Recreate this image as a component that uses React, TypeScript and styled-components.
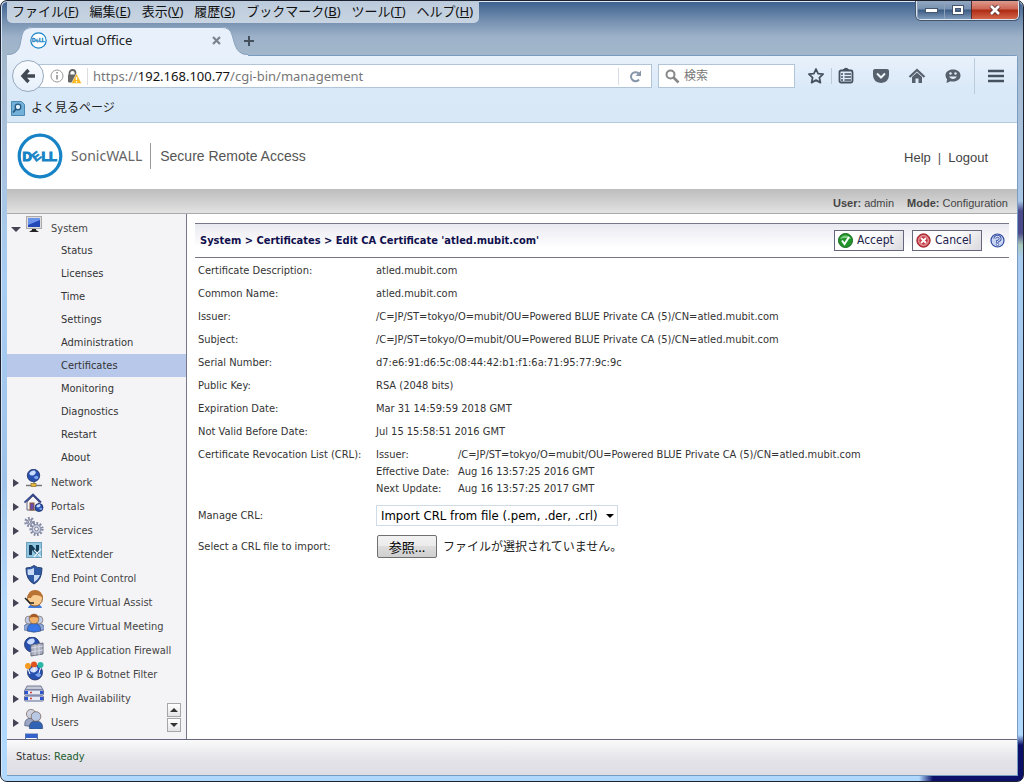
import React, { useRef, useState } from 'react';
import styled, { createGlobalStyle } from 'styled-components';

const ui = "'DejaVu Sans Condensed', 'Noto Sans', 'Noto Sans CJK JP', sans-serif";
const jp = "'Noto Sans', 'Noto Sans CJK JP', sans-serif";
const arial = "'Liberation Sans', 'Noto Sans CJK JP', sans-serif";

const GlobalStyle = createGlobalStyle`
  * { box-sizing: border-box; }
  body { margin: 0; font-family: ${ui}; font-size: 11px; color: #333; }
  button, input, select { font-family: inherit; margin: 0; }
`;

const Frame = styled.div`
  display: flex;
  flex-direction: column;
  height: 100vh;
  padding: 0 5px 0 6px;
  border: 1px solid #1c2230;
  border-radius: 7px;
  overflow: hidden;
  background:
    linear-gradient(90deg, transparent calc(100% - 104px), #0c1068 calc(100% - 90px)) bottom / 100% 6px no-repeat,
    linear-gradient(180deg, transparent 200px, #4b4a8c 210px, #4b4a8c 232px, #a9c8b8 244px, transparent 256px, transparent calc(100% - 46px), #0c1068 calc(100% - 36px)) right / 6px 100% no-repeat,
    linear-gradient(180deg, #3b5f8e 0, #7690b0 20px, #9db2c9 36px, #a3b7cb 54px, #a9bdd4 90px, #a8cdf3 280px, #9fc2e8 480px, #b5d9fb 600px, #b0d8ff 100%);
  box-shadow: inset 0 1px #dfe8f3, inset 1px 0 #d5e6f6;
`;

const TopRow = styled.div`
  display: flex;
  justify-content: space-between;
  height: 23px;
  flex: none;
  margin-right: -1px;
`;

const MenuBar = styled.nav`
  display: flex;
  gap: 11px;
  height: 22px;
  padding: 0 6px 0 5px;
  border-radius: 0 0 5px 5px;
  background: linear-gradient(180deg, #bccbdc, #c8d4e1);
`;

const MenuItem = styled.button`
  border: 0;
  padding: 0 0 3px;
  background: none;
  font: 13px/18px ${jp};
  color: #111;
  white-space: nowrap;
`;

const WindowButtons = styled.div`
  display: flex;
  height: 19px;
  border: 1px solid #dbe5ef;
  border-top: 0;
  border-radius: 0 0 5px 5px;
  overflow: hidden;
  box-shadow: 0 0 0 1px #44546c;
`;

const WindowButton = styled.button<{ $close?: boolean }>`
  display: flex;
  align-items: center;
  justify-content: center;
  width: ${p => (p.$close ? 47 : 27)}px;
  padding: 0;
  border: 0;
  border-left: 1px solid ${p => (p.$close ? '#5a2a2a' : '#8da1b8')};
  background: ${p => p.$close
    ? 'linear-gradient(180deg, #dc9a8d 0, #cd6553 45%, #ac2a12 50%, #d4664a 100%)'
    : 'linear-gradient(180deg, #93a8c2 0, #7590b0 45%, #3b5a82 50%, #7f9bbb 100%)'};
`;

const TabStrip = styled.div`
  display: flex;
  align-items: flex-end;
  height: 31px;
  flex: none;
`;

const Tab = styled.div`
  position: relative;
  display: flex;
  align-items: center;
  width: 233px;
  height: 28px;
  padding: 0 19px 2px 23px;
  font: 13px/26px ${jp};
  color: #222;
`;

const TabShape = styled.svg`
  position: absolute;
  left: 0;
  top: 0;
`;

const TabTitle = styled.span`
  position: relative;
  flex: 1;
  padding-left: 6px;
`;

const PlainButton = styled.button`
  position: relative;
  display: flex;
  align-items: center;
  justify-content: center;
  border: 0;
  padding: 0;
  background: none;
  color: #4b5663;
`;

const NewTab = styled(PlainButton)`
  width: 18px;
  height: 28px;
`;

const Client = styled.div`
  display: flex;
  flex-direction: column;
  flex: 1;
  min-height: 0;
  margin-bottom: 5px;
  border: 1px solid #7a9cc0;
  border-width: 1px 1px 1px 0;
  border-radius: 0 3px 0 0;
  background: #fff;
`;

const Chrome = styled.div`
  background: linear-gradient(180deg, #e8f1fb 0, #dae9f8 32px, #d8e8f7 100%);
  border-bottom: 1px solid #b6cadd;
`;

const NavBar = styled.div`
  display: flex;
  align-items: center;
  height: 40px;
  padding: 0 12px 0 5px;
`;

const BackButton = styled.button`
  position: relative;
  display: flex;
  align-items: center;
  justify-content: center;
  width: 32px;
  height: 32px;
  margin-right: -6px;
  padding: 0;
  border: 1px solid #97a9bd;
  border-radius: 50%;
  background: linear-gradient(180deg, #f8fbfe, #e6f0fa);
`;

const UrlBox = styled.div`
  display: flex;
  align-items: center;
  flex: 1;
  height: 24px;
  padding-left: 11px;
  border: 1px solid #b2c5d8;
  background: #fff;
`;

const UrlText = styled.div`
  flex: 1;
  margin-left: 5px;
  padding-left: 5px;
  border-left: 1px solid #ddd;
  font: 13px/17px ${jp};
  color: #777;
`;

const Host = styled.span`
  color: #111;
`;

const Reload = styled(PlainButton)`
  width: 33px;
  height: 17px;
  border-left: 1px solid #d5dce3;
`;

const SearchBox = styled.label`
  display: flex;
  align-items: center;
  width: 137px;
  height: 24px;
  margin: 0 12px 0 6px;
  padding-left: 6px;
  border: 1px solid #b2c5d8;
  background: #fff;
`;

const SearchInput = styled.input`
  flex: 1;
  min-width: 0;
  margin-left: 4px;
  padding: 0;
  border: 0;
  outline: 0;
  font: 12px/18px ${jp};
  background: none;
  &::placeholder { color: #777; opacity: 1; }
`;

const Tools = styled.div`
  display: flex;
  align-items: center;
  gap: 18px;
`;

const ToolDivider = styled.i<{ $tall?: boolean }>`
  width: 1px;
  height: ${p => (p.$tall ? 36 : 16)}px;
  margin: 0 ${p => (p.$tall ? -6 : -12)}px;
  background: #bccbda;
`;

const Bookmarks = styled.div`
  display: flex;
  align-items: center;
  gap: 6px;
  height: 26px;
  padding: 0 4px 2px;
  font: 12px/20px ${jp};
  color: #222;
`;

const Brand = styled.header`
  display: flex;
  align-items: center;
  flex: none;
  height: 66px;
  padding: 0 29px 0 10px;
  font: 13px/20px ${arial};
  color: #555;
`;

const BrandName = styled.span`
  margin-left: 8px;
  padding-right: 8px;
  font: 14px/26px 'Noto Sans', sans-serif;
  color: #666;
  border-right: 1px solid #999;
`;

const Product = styled.span`
  flex: 1;
  padding-left: 9px;
  font-size: 14px;
`;

const HeadLinks = styled.div`
  display: flex;
  gap: 7px;
  padding-top: 4px;
`;

const HeadLink = styled.a`
  color: #444;
  text-decoration: none;
`;

const ModeBar = styled.div`
  display: flex;
  justify-content: flex-end;
  gap: 13px;
  flex: none;
  height: 25px;
  padding: 4px 9px 0;
  border-bottom: 1px solid #aaa;
  background: linear-gradient(180deg, #bdbdbd, #e2e2e2);
  font: 11px/20px ${arial};
  color: #444;
`;

const Main = styled.div`
  display: flex;
  flex: 1;
  min-height: 0;
`;

const Sidebar = styled.nav`
  position: relative;
  width: 180px;
  flex: none;
  overflow: hidden;
  padding-top: 1px;
  border-right: 1px solid #77778a;
  background: #f4f4f7;
`;

const TreeRow = styled.a`
  display: grid;
  grid-template-columns: 17px 27px 1fr;
  height: 24px;
  color: #444;
  text-decoration: none;
  line-height: 28px;
  white-space: nowrap;
`;

const Caret = styled.span<{ $open?: boolean }>`
  align-self: center;
  justify-self: center;
  width: 0;
  height: 0;
  border: 4px solid transparent;
  ${p => (p.$open
    ? 'border-top: 5px solid #444455; border-bottom: 0; border-left-width: 5px; border-right-width: 5px;'
    : 'border-left: 6px solid #444455; border-right: 0;')}
`;

const SubRow = styled.a<{ $active?: boolean }>`
  display: block;
  height: 23px;
  padding-left: 54px;
  line-height: 24px;
  color: #333;
  text-decoration: none;
  background: ${p => (p.$active ? '#b8c8ea' : 'none')};
`;

const Scroller = styled.div`
  position: absolute;
  right: 5px;
  bottom: 7px;
  display: grid;
  gap: 1px;
`;

const ScrollButton = styled.button`
  display: flex;
  align-items: center;
  justify-content: center;
  width: 14px;
  height: 14px;
  padding: 0;
  border: 1px solid #a5a5aa;
  background: linear-gradient(180deg, #fff, #e4e4e8);
`;

const Content = styled.main`
  flex: 1;
  min-width: 0;
  padding: 9px 8px 0 8px;
`;

const TitleBar = styled.div`
  display: flex;
  align-items: center;
  gap: 8px;
  height: 35px;
  padding: 0 4px 0 5px;
  border-top: 1px solid #77778a;
  border-bottom: 1px solid #77778a;
  background: linear-gradient(180deg, #e9e9f1 0, #fff 70%);
`;

const Title = styled.h1`
  flex: 1;
  margin: 0;
  font-size: 11px;
  font-weight: bold;
  color: #10104c;
`;

const ActionButton = styled.button`
  display: flex;
  align-items: center;
  gap: 4px;
  width: 70px;
  height: 21px;
  padding: 0 3px 1px;
  border: 1px solid #66667c;
  background: linear-gradient(135deg, #fff 50%, #d9d9de);
  font-size: 12px;
  line-height: 18px;
  color: #22224c;
`;

const Details = styled.table`
  width: 100%;
  margin-top: 1px;
  border-collapse: collapse;
  line-height: 17px;
`;

const Label = styled.th`
  width: 181px;
  padding: 3px 0 3px 3px;
  font-weight: normal;
  text-align: left;
  vertical-align: top;
`;

const Value = styled.td`
  padding: 3px 0;
  vertical-align: top;
`;

const ControlLabel = styled(Label)`
  padding-top: 7px;
  padding-bottom: 7px;
`;

const ControlValue = styled(Value)`
  height: 31px;
  vertical-align: middle;
`;

const Crl = styled.dl`
  display: grid;
  grid-template-columns: 82px 1fr;
  margin: 0;
`;

const CrlValue = styled.dd`
  margin: 0;
`;

const SelectWrap = styled.div`
  position: relative;
  display: inline-flex;
  align-items: center;
  width: 242px;
  height: 21px;
  vertical-align: middle;
`;

const Select = styled.select`
  appearance: none;
  width: 100%;
  height: 100%;
  padding: 0 18px 0 4px;
  border: 1px solid #cfdbe8;
  border-radius: 0;
  background: #fff;
  color: #000;
  font-size: 13px;
`;

const SelectArrow = styled.svg`
  position: absolute;
  right: 4px;
  pointer-events: none;
`;

const FileRow = styled.div`
  display: flex;
  align-items: center;
  gap: 6px;
  padding-left: 1px;
  font: 12px/20px ${jp};
  color: #222;
`;

const Browse = styled.button`
  width: 60px;
  height: 23px;
  padding: 0;
  border: 1px solid #707070;
  border-radius: 2px;
  background: linear-gradient(180deg, #f2f2f2 0, #ebebeb 48%, #dddddd 50%, #cfcfcf 100%);
  font: 13px/20px ${jp};
  color: #000;
`;

const StatusBar = styled.footer`
  flex: none;
  height: 36px;
  padding-left: 9px;
  border-top: 1px solid #66667a;
  background: linear-gradient(180deg, #fafafa, #e2e2e8 60%, #dedee4);
  line-height: 34px;
  color: #333;
`;

const Ready = styled.span`
  color: #1d5c2c;
`;

const Logo = styled.svg`
  position: relative;
  flex: none;
`;

const DellLogo = ({ size }: { size: number }) => (
  <Logo width={size} height={size} viewBox="0 0 46 46">
    <circle cx="23" cy="23" r="20.8" fill="#fff" stroke="#1683c6" strokeWidth="3.2" />
    <g fill="#1683c6" stroke="#1683c6" strokeWidth="1.1" fontFamily="Liberation Sans, sans-serif" fontWeight="bold" fontSize="13">
      <text x="5.5" y="27.5">D</text>
      <text x="15.3" y="27.3" fontSize="12" strokeWidth=".6" transform="rotate(-38 19.5 23)">E</text>
      <text x="24.5" y="27.5">L</text>
      <text x="32" y="27.5">L</text>
    </g>
  </Logo>
);

const Globe = ({ x = 10, y = 8, r = 7 }: { x?: number; y?: number; r?: number }) => (
  <g>
    <circle cx={x} cy={y} r={r} fill="#274fae" stroke="#1d2d60" strokeWidth=".8" />
    <path d={`M${x - r * 0.7} ${y - r * 0.3}q${r * 0.3} ${-r * 0.6} ${r * 0.9} ${-r * 0.5}q${r * 0.4} ${r * 0.4} ${-r * 0.1} ${r * 0.7}q${-r * 0.5} ${r * 0.3} ${-r * 0.8} ${-r * 0.2}z`} fill="#c9dcff" />
    <path d={`M${x} ${y + r * 0.3}q${r * 0.6} ${-r * 0.5} ${r * 0.8} 0q${-r * 0.2} ${r * 0.6} ${-r * 0.8} 0z`} fill="#7ea5ee" />
  </g>
);

const Person = ({ x, y, s = 1, head, body }: { x: number; y: number; s?: number; head: string; body: string }) => (
  <g transform={`translate(${x} ${y}) scale(${s})`}>
    <path d="M-6 10q0-6 6-6t6 6v1q-6 2-12 0z" fill={body} stroke="#33476e" strokeWidth=".6" />
    <circle cx="0" cy="0" r="4.4" fill={head} stroke="#6a5040" strokeWidth=".6" />
  </g>
);

const cog = (cx: number, cy: number, r: number) => (
  <g fill="none">
    <circle cx={cx} cy={cy} r={r} stroke="#858ba6" strokeWidth="3" strokeDasharray="1.7 1.5" />
    <circle cx={cx} cy={cy} r={r - 1.2} fill="#c9cddd" stroke="#7c829c" strokeWidth=".9" />
    <circle cx={cx} cy={cy} r={r / 3} fill="#f4f4f7" stroke="#70768f" strokeWidth=".8" />
  </g>
);

const drawings: Record<string, React.ReactNode> = {
  System: <><rect x="2.5" y="1.5" width="15" height="12" fill="#ddd" stroke="#aaa" /><rect x="4" y="3" width="12" height="9" fill="#2448b8" /><path d="M4 3h12v2L4 10z" fill="#6d94ec" /><path d="M8 14h4v1l3 2H5l3-2z" fill="#222" /></>,
  Network: <><Globe x={9.5} y={6.5} r={6.2} /><path d="M2 16.5h16M10 13v3" stroke="#777" strokeWidth="1.3" /><rect x="7" y="14.5" width="5" height="3" fill="#e5b83c" stroke="#84651c" strokeWidth=".6" /></>,
  Portals: <><path d="M3 9l6-6 6 6v8H3z" fill="#f4f4f8" stroke="#667" /><path d="M.5 9.5L9 1.5l8 8" fill="none" stroke="#36478d" strokeWidth="1.8" /><rect x="6" y="10" width="4" height="7" fill="#6748b4" stroke="#8b5a2b" /><Globe x={15} y={14.5} r={4} /></>,
  Services: <>{cog(5.5, 5, 3.8)}{cog(12.5, 12, 5.6)}</>,
  NetExtender: <><rect x="2.5" y="1.5" width="15" height="15" fill="#8fc5df" stroke="#6da0bb" /><path d="M5 14V4h3l4 5V4h3v10h-2L8 9v5z" fill="#153a58" /><path d="M10 16l7-8M10 9l7 7" stroke="#dff4ff" strokeWidth="1.2" /></>,
  'End Point Control': <><path d="M2 3q5 0 8-2.5q3 2.5 8 2.5q0 12-8 16Q2 15 2 3z" fill="#3059a5" stroke="#274173" /><path d="M10 3v7H4q-.5-2-.5-5.5Q7 4.5 10 3zM10 10h6q-2 5-6 7z" fill="#c9dbf8" /></>,
  'Secure Virtual Assist': <><path d="M4 19q1-4 7-4t7 4z" fill="#3f79dc" /><circle cx="11" cy="9.500" r="7.5" fill="#f8cb91" stroke="#9b642d" /><path d="M3.500 9Q4 1 11 1t8 8q-3-3-8-3-3 0-4 3z" fill="#b97434" /><path d="M1 9l5 5h4" stroke="#222" strokeWidth="1.5" fill="none" /></>,
  'Secure Virtual Meeting': <><Person x={5} y={7} s={0.9} head="#bfcde8" body="#8fa7d7" /><Person x={15} y={7} s={0.9} head="#bfcde8" body="#8fa7d7" /><Person x={10} y={6} s={1.1} head="#eeb06c" body="#3977e8" /><path d="M5.500 5q1-4 4.500-4t4.500 4q-5-2-9 0z" fill="#a95b26" /></>,
  'Web Application Firewall': <><Globe x={8} y={7.5} r={7.5} /><path d="M7 8l12-2v11l-12 2z" fill="#a9adbd" stroke="#686d80" /><path d="M7 11l12-2M7 15l12-2M11 7.500v11M15 7v11" stroke="#d7d9e3" /></>,
  'Geo IP & Botnet Filter': <><Globe x={11} y={11.5} r={7.5} /><circle cx="4" cy="5" r="3" fill="#f59b23" /><circle cx="10" cy="3.500" r="3" fill="#e0541f" /><circle cx="16.5" cy="4" r="3" fill="#2bb7a8" /><path d="M4 8l2 5M10 6v5M16.500 7L15 12" stroke="#fff" /></>,
  'High Availability': <><path d="M3 1h14l2 4H1z" fill="#c3c7d6" stroke="#777c92" /><rect x=".5" y="5" width="19" height="5" rx="1" fill="#e7e9f2" stroke="#5f6b95" /><rect x=".5" y="11" width="19" height="5" rx="1" fill="#e7e9f2" stroke="#5f6b95" /><path d="M1 7.500h3M1 13.500h3M16 7.500h3M16 13.500h3" stroke="#2b55d0" strokeWidth="3" /><path d="M6 7.500h2M6 13.500h2" stroke="#d03a3a" strokeWidth="1.5" /></>,
  Users: <><Person x={7} y={5} s={1.05} head="#ccd2e0" body="#9ba7c4" /><Person x={12} y={7.5} s={1.1} head="#b9c8e4" body="#3164b4" /></>,
  Log: <><rect x="1.5" y="1" width="12" height="14" fill="#fff" stroke="#5670b4" /><rect x="2" y="1" width="11" height="4" fill="#3462cc" /><path d="M4 7h5" stroke="#89a" /><circle cx="13" cy="9" r="3" fill="#dbe5f5" stroke="#69a" /></>,
};

const ItemIcon = ({ name }: { name: string }) => (
  <svg width="20" height="20" viewBox="0 0 20 20" aria-hidden="true">{drawings[name]}</svg>
);

const menus = [['ファイル', 'F'], ['編集', 'E'], ['表示', 'V'], ['履歴', 'S'], ['ブックマーク', 'B'], ['ツール', 'T'], ['ヘルプ', 'H']];
const systemPages = ['Status', 'Licenses', 'Time', 'Settings', 'Administration', 'Certificates', 'Monitoring', 'Diagnostics', 'Restart', 'About'];
const sections = ['Network', 'Portals', 'Services', 'NetExtender', 'End Point Control', 'Secure Virtual Assist', 'Secure Virtual Meeting', 'Web Application Firewall', 'Geo IP & Botnet Filter', 'High Availability', 'Users'];
const subject = '/C=JP/ST=tokyo/O=mubit/OU=Powered BLUE Private CA (5)/CN=atled.mubit.com';
const fields = [
  ['Certificate Description:', 'atled.mubit.com'],
  ['Common Name:', 'atled.mubit.com'],
  ['Issuer:', subject],
  ['Subject:', subject],
  ['Serial Number:', 'd7:e6:91:d6:5c:08:44:42:b1:f1:6a:71:95:77:9c:9c'],
  ['Public Key:', 'RSA (2048 bits)'],
  ['Expiration Date:', 'Mar 31 14:59:59 2018 GMT'],
  ['Not Valid Before Date:', 'Jul 15 15:58:51 2016 GMT'],
];

function BrowserTop() {
  return (
    <>
      <TopRow>
        <MenuBar>
          {menus.map(([name, key]) => <MenuItem key={key}>{name}(<u>{key}</u>)</MenuItem>)}
        </MenuBar>
        <WindowButtons>
          <WindowButton aria-label="Minimize"><svg width="13" height="6"><rect x=".5" y="1.5" width="12" height="4" fill="#fff" stroke="#46566c" /></svg></WindowButton>
          <WindowButton aria-label="Maximize"><svg width="12" height="10"><rect x="2" y="2" width="8" height="6" fill="none" stroke="#46566c" strokeWidth="4" /><rect x="2" y="2" width="8" height="6" fill="none" stroke="#fff" strokeWidth="2" /></svg></WindowButton>
          <WindowButton $close aria-label="Close"><svg width="14" height="12"><path d="M3 2l8 8M11 2l-8 8" stroke="#5c3138" strokeWidth="4.5" /><path d="M3 2l8 8M11 2l-8 8" stroke="#fff" strokeWidth="2.6" /></svg></WindowButton>
        </WindowButtons>
      </TopRow>
      <TabStrip>
        <Tab>
          <TabShape width="241" height="29" viewBox="0 0 241 29">
            <path d="M0 29V28Q11 28 13 18L15 8Q17 0 26 0H215Q223 0 225 8L228 18Q231 28 241 28V29z" fill="#e8f1fb" />
            <path d="M0 27.5Q11 27.5 13 18L15 8Q17 .5 26 .5H215Q223 .5 225 8L228 18Q231 27.5 241 27.5" fill="none" stroke="#8aa2bc" />
          </TabShape>
          <DellLogo size={17} />
          <TabTitle>Virtual Office</TabTitle>
          <PlainButton aria-label="Close tab"><svg width="9" height="9"><path d="M1 1l7 7M8 1L1 8" stroke="#7a8491" strokeWidth="2.2" /></svg></PlainButton>
        </Tab>
        <NewTab aria-label="New tab"><svg width="12" height="12"><path d="M6 1v10M1 6h10" stroke="#44505e" strokeWidth="2" /></svg></NewTab>
      </TabStrip>
    </>
  );
}

function BrowserBars() {
  return (
    <Chrome>
      <NavBar>
        <BackButton aria-label="Back"><svg width="16" height="16"><path d="M8.500 2L3 8l5.500 6M3 8h12" fill="none" stroke="#404952" strokeWidth="3.4" /></svg></BackButton>
        <UrlBox>
          <svg width="32" height="16" viewBox="0 0 32 16">
            <circle cx="7" cy="8" r="6" fill="none" stroke="#999" /><path d="M7 7v4.500M7 4v1.600" stroke="#888" strokeWidth="1.5" />
            <path d="M19.500 7V5a3 3 0 016 0v2" fill="none" stroke="#666" strokeWidth="1.8" /><rect x="18" y="6.5" width="9" height="8" rx="1" fill="#666" />
            <path d="M26.500 5.500l5.200 10H21.300z" fill="#fdb81e" stroke="#fff" strokeWidth=".5" /><path d="M26.500 9v3M26.500 13v1.400" stroke="#fff" strokeWidth="1.4" />
          </svg>
          <UrlText>https://<Host>192.168.100.77</Host>/cgi-bin/management</UrlText>
          <Reload aria-label="Reload"><svg width="13" height="13"><path d="M10 9.500A4.500 4.500 0 119.500 3.300" fill="none" stroke="#8796a8" strokeWidth="2" /><path d="M12 .5V6H6.500z" fill="#8796a8" /></svg></Reload>
        </UrlBox>
        <SearchBox>
          <svg width="15" height="15"><circle cx="5.5" cy="5.5" r="4" fill="none" stroke="#888" strokeWidth="2" /><path d="M8.500 8.500l5 5" stroke="#888" strokeWidth="2.6" /></svg>
          <SearchInput placeholder="検索" aria-label="検索" />
        </SearchBox>
        <Tools>
          <PlainButton aria-label="Bookmark"><svg width="18" height="18"><path d="M9 2l2.100 4.600 5 .6-3.700 3.400 1 5L9 13.100l-4.400 2.500 1-5L1.900 7.200l5-.6z" fill="none" stroke="#46525f" strokeWidth="1.8" strokeLinejoin="round" /></svg></PlainButton>
          <ToolDivider />
          <PlainButton aria-label="Bookmarks list"><svg width="16" height="18"><rect x="1.5" y="3.5" width="13" height="12" rx="1.5" fill="none" stroke="#46525f" strokeWidth="1.8" /><path d="M5 3q3-3.500 6 0z" fill="#46525f" stroke="#46525f" /><path d="M3 7h2M6.500 7H13M3 10h2M6.500 10H13M3 13h2M6.500 13H13" stroke="#46525f" strokeWidth="1.3" /></svg></PlainButton>
          <PlainButton aria-label="Pocket"><svg width="18" height="18"><path d="M1 4q0-2 2-2h12q2 0 2 2v4q0 7-8 8-8-1-8-8z" fill="#56616d" /><path d="M5 6.500l4 4 4-4" fill="none" stroke="#eef5fb" strokeWidth="2" /></svg></PlainButton>
          <PlainButton aria-label="Home"><svg width="18" height="18"><path d="M1.500 10L9 3l7.500 7" fill="none" stroke="#56616d" strokeWidth="2.2" /><path d="M4 10l5-4.500L14 10v6h-3.500v-4.500h-3V16H4z" fill="#56616d" /></svg></PlainButton>
          <PlainButton aria-label="Hello"><svg width="18" height="18"><path d="M9 2.500c4.500 0 7.500 2.500 7.500 6s-3 6-7.500 6q-1.500 0-2.500-.3L2.500 16l.6-3.700Q1.500 10.500 1.500 8.500c0-3.500 3-6 7.500-6z" fill="#56616d" /><path d="M5 9.500q4 5 8 0z" fill="#e3eefa" /><circle cx="6.5" cy="6.5" r="1.2" fill="#e3eefa" /><circle cx="11.5" cy="6.5" r="1.2" fill="#e3eefa" /></svg></PlainButton>
          <ToolDivider $tall />
          <PlainButton aria-label="Menu"><svg width="18" height="16"><path d="M1 3h16M1 8h16M1 13h16" stroke="#46525f" strokeWidth="2.6" /></svg></PlainButton>
        </Tools>
      </NavBar>
      <Bookmarks>
        <svg width="14" height="16"><path d="M.5 1.500h10l3 3v11H.5z" fill="#74b1d9" stroke="#4a88b4" /><circle cx="7" cy="7" r="2.8" fill="#dff1fc" stroke="#24587e" strokeWidth="1.3" /><path d="M5 9l-3 3.500" stroke="#24587e" strokeWidth="1.8" /></svg>
        よく見るページ
      </Bookmarks>
    </Chrome>
  );
}

function FileField() {
  const input = useRef<HTMLInputElement>(null);
  const [name, setName] = useState('');
  return (
    <FileRow>
      <input ref={input} id="crl-file" type="file" hidden onChange={e => setName(e.target.files?.[0]?.name ?? '')} />
      <Browse type="button" onClick={() => input.current?.click()}>参照...</Browse>
      <span>{name || 'ファイルが選択されていません。'}</span>
    </FileRow>
  );
}

export default function App() {
  return (
    <Frame>
      <GlobalStyle />
      <BrowserTop />
      <Client>
        <BrowserBars />
        <Brand>
          <DellLogo size={46} />
          <BrandName>SonicWALL</BrandName>
          <Product>Secure Remote Access</Product>
          <HeadLinks><HeadLink href="#help">Help</HeadLink><span>|</span><HeadLink href="#logout">Logout</HeadLink></HeadLinks>
        </Brand>
        <ModeBar>
          <span><b>User:</b> admin</span>
          <span><b>Mode:</b> Configuration</span>
        </ModeBar>
        <Main>
          <Sidebar>
            <TreeRow href="#system"><Caret $open /><ItemIcon name="System" />System</TreeRow>
            {systemPages.map(p => <SubRow key={p} href="#page" $active={p === 'Certificates'}>{p}</SubRow>)}
            {sections.map(s => <TreeRow key={s} href="#section"><Caret /><ItemIcon name={s} />{s}</TreeRow>)}
            <TreeRow href="#log"><span /><ItemIcon name="Log" /></TreeRow>
            <Scroller>
              <ScrollButton aria-label="Scroll up"><svg width="8" height="4"><path d="M0 4l4-4 4 4z" fill="#333" /></svg></ScrollButton>
              <ScrollButton aria-label="Scroll down"><svg width="8" height="4"><path d="M0 0l4 4 4-4z" fill="#333" /></svg></ScrollButton>
            </Scroller>
          </Sidebar>
          <Content>
            <TitleBar>
              <Title>System &gt; Certificates &gt; Edit CA Certificate 'atled.mubit.com'</Title>
              <ActionButton>
                <svg width="15" height="15"><circle cx="7.5" cy="7.5" r="7" fill="#23932c" stroke="#14691c" /><path d="M2 6a6 6 0 0111 0q-6-2-11 0z" fill="#7fd080" /><path d="M4 7.500l2.500 3.500 4.500-7" fill="none" stroke="#fff" strokeWidth="2" /></svg>
                Accept
              </ActionButton>
              <ActionButton>
                <svg width="15" height="15"><circle cx="7.5" cy="7.5" r="6.7" fill="#c63a42" stroke="#9c2a34" /><circle cx="7.5" cy="7.5" r="4.8" fill="none" stroke="#f1c5c8" /><path d="M5 5l5 5M10 5l-5 5" stroke="#fff" strokeWidth="1.8" /></svg>
                Cancel
              </ActionButton>
              <PlainButton aria-label="Help">
                <svg width="15" height="15"><circle cx="7.5" cy="7.5" r="6.5" fill="#c8d4f2" stroke="#2f4aa0" strokeWidth="1.2" /><path d="M4.800 5.800a2.700 2.500 0 115.400 0q0 1.700-2.700 2.500v1.400" fill="none" stroke="#2f4aa0" strokeWidth="2.6" /><path d="M4.800 5.800a2.700 2.500 0 115.400 0q0 1.700-2.700 2.500v1" fill="none" stroke="#fff" strokeWidth="1" /><circle cx="7.5" cy="11.5" r="1.2" fill="#fff" stroke="#2f4aa0" strokeWidth=".8" /></svg>
              </PlainButton>
            </TitleBar>
            <Details>
              <tbody>
                {fields.map(([k, v]) => <tr key={k}><Label scope="row">{k}</Label><Value>{v}</Value></tr>)}
                <tr>
                  <Label scope="row">Certificate Revocation List (CRL):</Label>
                  <Value>
                    <Crl>
                      <dt>Issuer:</dt><CrlValue>{subject}</CrlValue>
                      <dt>Effective Date:</dt><CrlValue>Aug 16 13:57:25 2016 GMT</CrlValue>
                      <dt>Next Update:</dt><CrlValue>Aug 16 13:57:25 2017 GMT</CrlValue>
                    </Crl>
                  </Value>
                </tr>
                <tr>
                  <ControlLabel scope="row"><label htmlFor="manage-crl">Manage CRL:</label></ControlLabel>
                  <ControlValue>
                    <SelectWrap>
                      <Select id="manage-crl"><option>Import CRL from file (.pem, .der, .crl)</option></Select>
                      <SelectArrow width="8" height="4"><path d="M0 0h8L4 4z" fill="#000" /></SelectArrow>
                    </SelectWrap>
                  </ControlValue>
                </tr>
                <tr>
                  <ControlLabel scope="row"><label htmlFor="crl-file">Select a CRL file to import:</label></ControlLabel>
                  <ControlValue><FileField /></ControlValue>
                </tr>
              </tbody>
            </Details>
          </Content>
        </Main>
        <StatusBar>Status: <Ready>Ready</Ready></StatusBar>
      </Client>
    </Frame>
  );
}
